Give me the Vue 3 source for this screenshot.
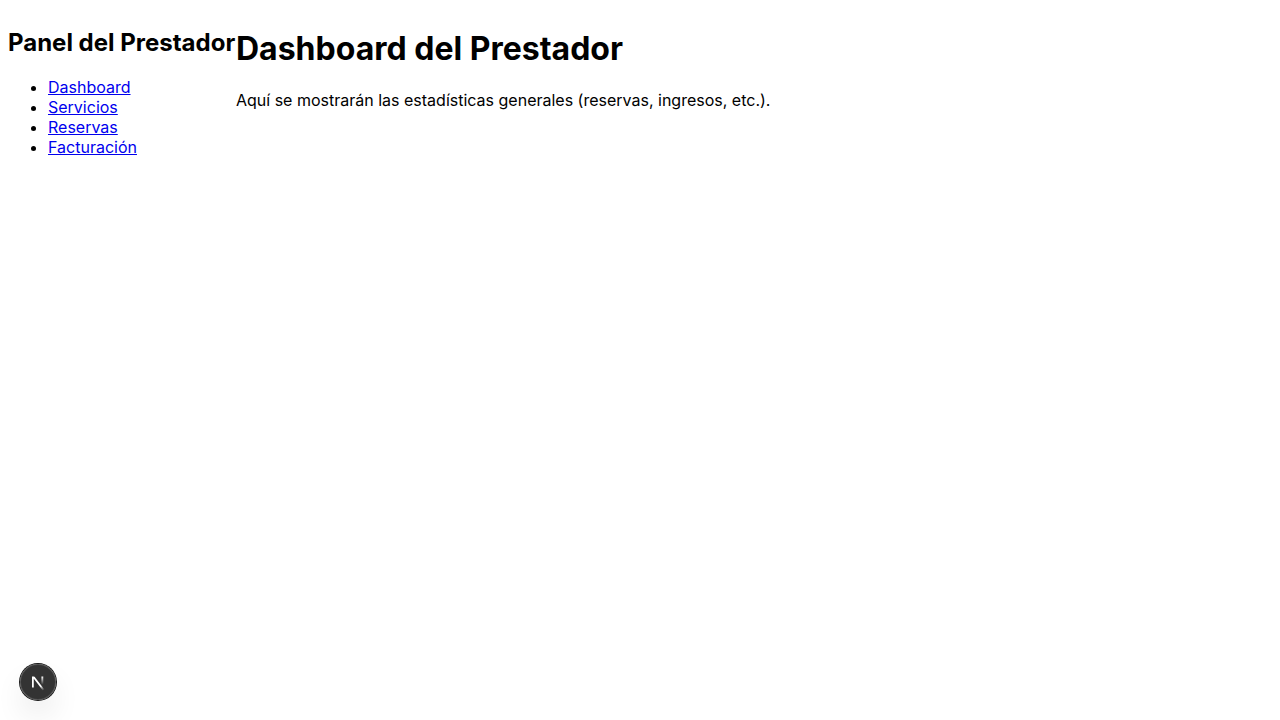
<script setup>
const links = ['Dashboard', 'Servicios', 'Reservas', 'Facturación']
</script>

<template>
  <div class="layout">
    <aside>
      <h2>Panel del Prestador</h2>
      <nav>
        <ul>
          <li v-for="link in links" :key="link"><a :href="'#' + link.toLowerCase()">{{ link }}</a></li>
        </ul>
      </nav>
    </aside>
    <main>
      <h1>Dashboard del Prestador</h1>
      <p>Aquí se mostrarán las estadísticas generales (reservas, ingresos, etc.).</p>
    </main>
  </div>
  <button class="dev-badge" type="button" aria-label="Open Next.js Dev Tools">
    <svg width="40" height="40" viewBox="0 0 40 40" fill="none" aria-hidden="true">
      <g transform="translate(12.5 13)">
        <path d="M13.3 15.2 L2.34 1 V12.6" stroke="url(#stem-a)" stroke-width="1.86" mask="url(#fade)" />
        <path d="M11.825 1.5 V13.1" stroke="url(#stem-b)" stroke-width="1.86" />
      </g>
      <defs>
        <linearGradient id="stem-a" x1="9.955" y1="11.13" x2="15.157" y2="17.97" gradientUnits="userSpaceOnUse">
          <stop stop-color="white" />
          <stop offset="0.604" stop-color="white" stop-opacity="0" />
          <stop offset="1" stop-color="white" stop-opacity="0" />
        </linearGradient>
        <linearGradient id="stem-b" x1="11.822" y1="1.4" x2="11.797" y2="9.626" gradientUnits="userSpaceOnUse">
          <stop stop-color="white" />
          <stop offset="1" stop-color="white" stop-opacity="0" />
        </linearGradient>
        <mask id="fade">
          <rect width="100%" height="100%" fill="white" />
          <rect width="5" height="1.5" fill="black" />
        </mask>
      </defs>
    </svg>
  </button>
</template>

<style>
body {
  margin: 8px;
  background: #fff;
}
</style>

<style scoped>
.layout {
  display: flex;
  color: #000;
  font-family: Inter, sans-serif;
  font-size: 16px;
  line-height: 20px;
}
aside {
  flex-shrink: 0;
  min-width: 228px;
}
h2 {
  margin: 20px 0;
  font-size: 24px;
  line-height: 29px;
}
h1 {
  margin: 21px 0;
  font-size: 32px;
  line-height: 40px;
}
ul {
  margin: 0;
  padding-left: 40px;
}
p {
  margin: 0;
}
a {
  color: #0000ee;
}
.dev-badge {
  position: fixed;
  left: 20px;
  bottom: 20px;
  width: 36px;
  height: 36px;
  padding: 0;
  display: flex;
  align-items: center;
  justify-content: center;
  border: 0;
  border-radius: 50%;
  background: rgba(0, 0, 0, 0.8);
  box-shadow: 0 0 0 1px #171717, inset 0 0 0 1px hsla(0, 0%, 100%, 0.14), 0 16px 32px -8px rgba(0, 0, 0, 0.24);
}
.dev-badge svg {
  flex-shrink: 0;
}
</style>
